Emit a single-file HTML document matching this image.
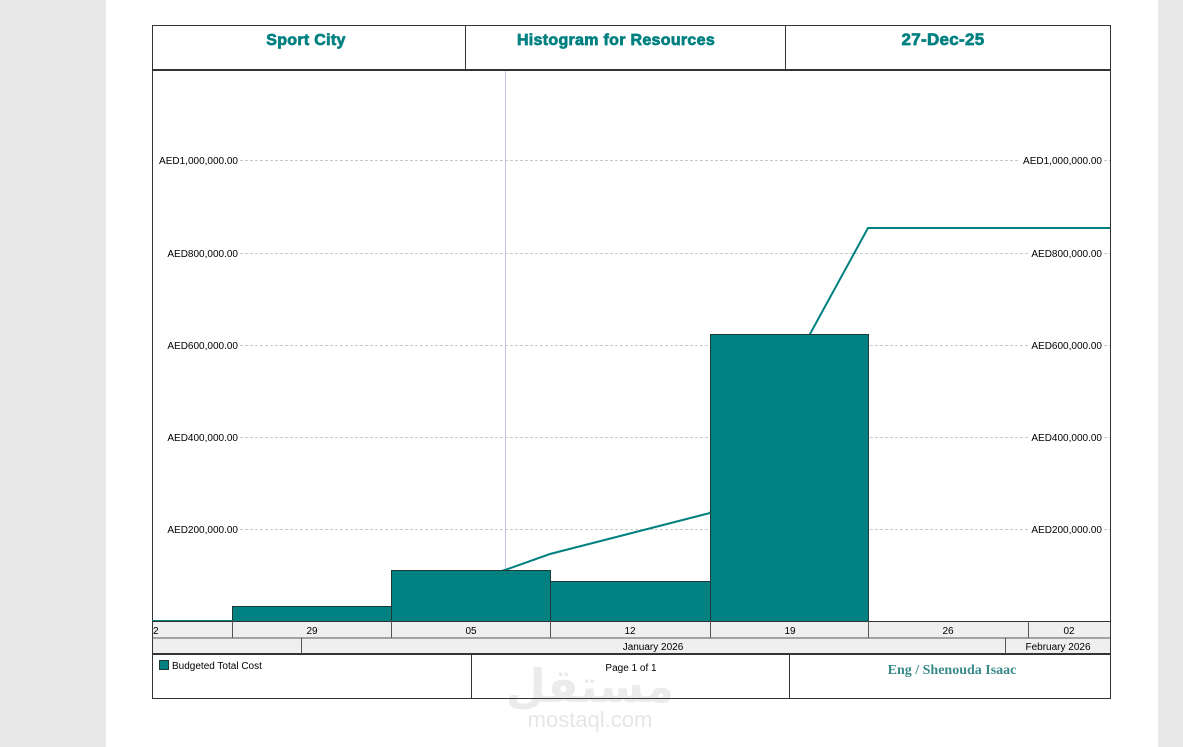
<!DOCTYPE html>
<html><head><meta charset="utf-8"><style>
body{margin:0;width:1183px;height:747px;background:#e8e8e8;position:relative;overflow:hidden;font-family:"Liberation Sans",Arial,sans-serif}
.page{position:absolute;left:106px;top:0;width:1052px;height:747px;background:#fff}
svg{position:absolute;left:0;top:0}
</style></head><body>
<div class="page"></div>
<svg width="1183" height="747" xmlns="http://www.w3.org/2000/svg" font-family="Liberation Sans, Arial, sans-serif">
<!-- watermark -->
<text x="590" y="702" font-size="46" font-weight="bold" fill="#ebebeb" text-anchor="middle" font-family="DejaVu Sans, sans-serif">مستقل</text>
<text x="590" y="727" font-size="22" fill="#e6e6e6" text-anchor="middle">mostaql.com</text>
<!-- header -->
<rect x="152.5" y="25.5" width="958" height="673" fill="none" stroke="#333" stroke-width="1"/>
<line x1="152" y1="70" x2="1111" y2="70" stroke="#333" stroke-width="2"/>
<line x1="465.5" y1="25" x2="465.5" y2="70" stroke="#333"/>
<line x1="785.5" y1="25" x2="785.5" y2="70" stroke="#333"/>
<g fill="#008080" stroke="#008080" stroke-width="0.7" font-weight="bold" font-size="16" text-anchor="middle" letter-spacing="0.3">
<text x="306" y="45">Sport City</text>
<text x="616" y="45">Histogram for Resources</text>
<text x="943" y="45" font-size="17">27-Dec-25</text>
</g>
<!-- grid -->
<g stroke="#c8c8c8" stroke-dasharray="3,2">
<line x1="240" y1="160.5" x2="1018" y2="160.5"/>
<line x1="240" y1="253.5" x2="1028" y2="253.5"/>
<line x1="240" y1="345.5" x2="1028" y2="345.5"/>
<line x1="240" y1="437.5" x2="1028" y2="437.5"/>
<line x1="240" y1="529.5" x2="1028" y2="529.5"/>
<line x1="1104" y1="160.5" x2="1110" y2="160.5"/>
<line x1="1104" y1="253.5" x2="1110" y2="253.5"/>
<line x1="1104" y1="345.5" x2="1110" y2="345.5"/>
<line x1="1104" y1="437.5" x2="1110" y2="437.5"/>
<line x1="1104" y1="529.5" x2="1110" y2="529.5"/>
</g>
<line x1="505.5" y1="71" x2="505.5" y2="621" stroke="#c4c4ec"/>
<g font-size="10" fill="#000">
<text x="238" y="164" text-anchor="end">AED1,000,000.00</text>
<text x="238" y="257" text-anchor="end">AED800,000.00</text>
<text x="238" y="349" text-anchor="end">AED600,000.00</text>
<text x="238" y="441" text-anchor="end">AED400,000.00</text>
<text x="238" y="533" text-anchor="end">AED200,000.00</text>
<text x="1102" y="164" text-anchor="end">AED1,000,000.00</text>
<text x="1102" y="257" text-anchor="end">AED800,000.00</text>
<text x="1102" y="349" text-anchor="end">AED600,000.00</text>
<text x="1102" y="441" text-anchor="end">AED400,000.00</text>
<text x="1102" y="533" text-anchor="end">AED200,000.00</text>
</g>
<!-- line -->
<line x1="152" y1="621" x2="232" y2="621" stroke="#008080" stroke-width="2"/>
<polyline points="400,600 505,570 550,554 710,513 810,334 868,228 1110,228" fill="none" stroke="#008080" stroke-width="2"/>
<!-- bars -->
<g fill="#008080" stroke="#1e3a3a" stroke-width="1">
<rect x="232.5" y="606.5" width="159" height="15"/>
<rect x="391.5" y="570.5" width="159" height="51"/>
<rect x="550.5" y="581.5" width="160" height="40"/>
<rect x="710.5" y="334.5" width="158" height="287"/>
</g>
<!-- axis rows -->
<rect x="152.5" y="621.5" width="958" height="32" fill="#efefef" stroke="#333"/>
<line x1="152" y1="638" x2="1111" y2="638" stroke="#555"/>
<line x1="152" y1="654" x2="1111" y2="654" stroke="#333" stroke-width="2"/>
<g stroke="#555">
<line x1="232.5" y1="621" x2="232.5" y2="638"/>
<line x1="391.5" y1="621" x2="391.5" y2="638"/>
<line x1="550.5" y1="621" x2="550.5" y2="638"/>
<line x1="710.5" y1="621" x2="710.5" y2="638"/>
<line x1="868.5" y1="621" x2="868.5" y2="638"/>
<line x1="1028.5" y1="621" x2="1028.5" y2="638"/>
<line x1="301.5" y1="638" x2="301.5" y2="654"/>
<line x1="1005.5" y1="638" x2="1005.5" y2="654"/>
</g>
<g font-size="10" text-anchor="middle">
<text x="153" y="634" text-anchor="start">2</text>
<text x="312" y="634">29</text>
<text x="471" y="634">05</text>
<text x="630" y="634">12</text>
<text x="790" y="634">19</text>
<text x="948" y="634">26</text>
<text x="1069" y="634">02</text>
<text x="653" y="650">January 2026</text>
<text x="1058" y="650">February 2026</text>
</g>
<!-- footer -->
<line x1="471.5" y1="654" x2="471.5" y2="698" stroke="#333"/>
<line x1="789.5" y1="654" x2="789.5" y2="698" stroke="#333"/>
<rect x="159.5" y="660.5" width="9" height="9" fill="#008080" stroke="#1e3a3a"/>
<text x="172" y="669" font-size="10">Budgeted Total Cost</text>
<text x="631" y="671" font-size="10" text-anchor="middle">Page 1 of 1</text>
<text x="952" y="674" font-size="14" font-weight="bold" fill="#3a8a8a" text-anchor="middle" font-family="Liberation Serif, serif">Eng / Shenouda Isaac</text>
</svg>
</body></html>
